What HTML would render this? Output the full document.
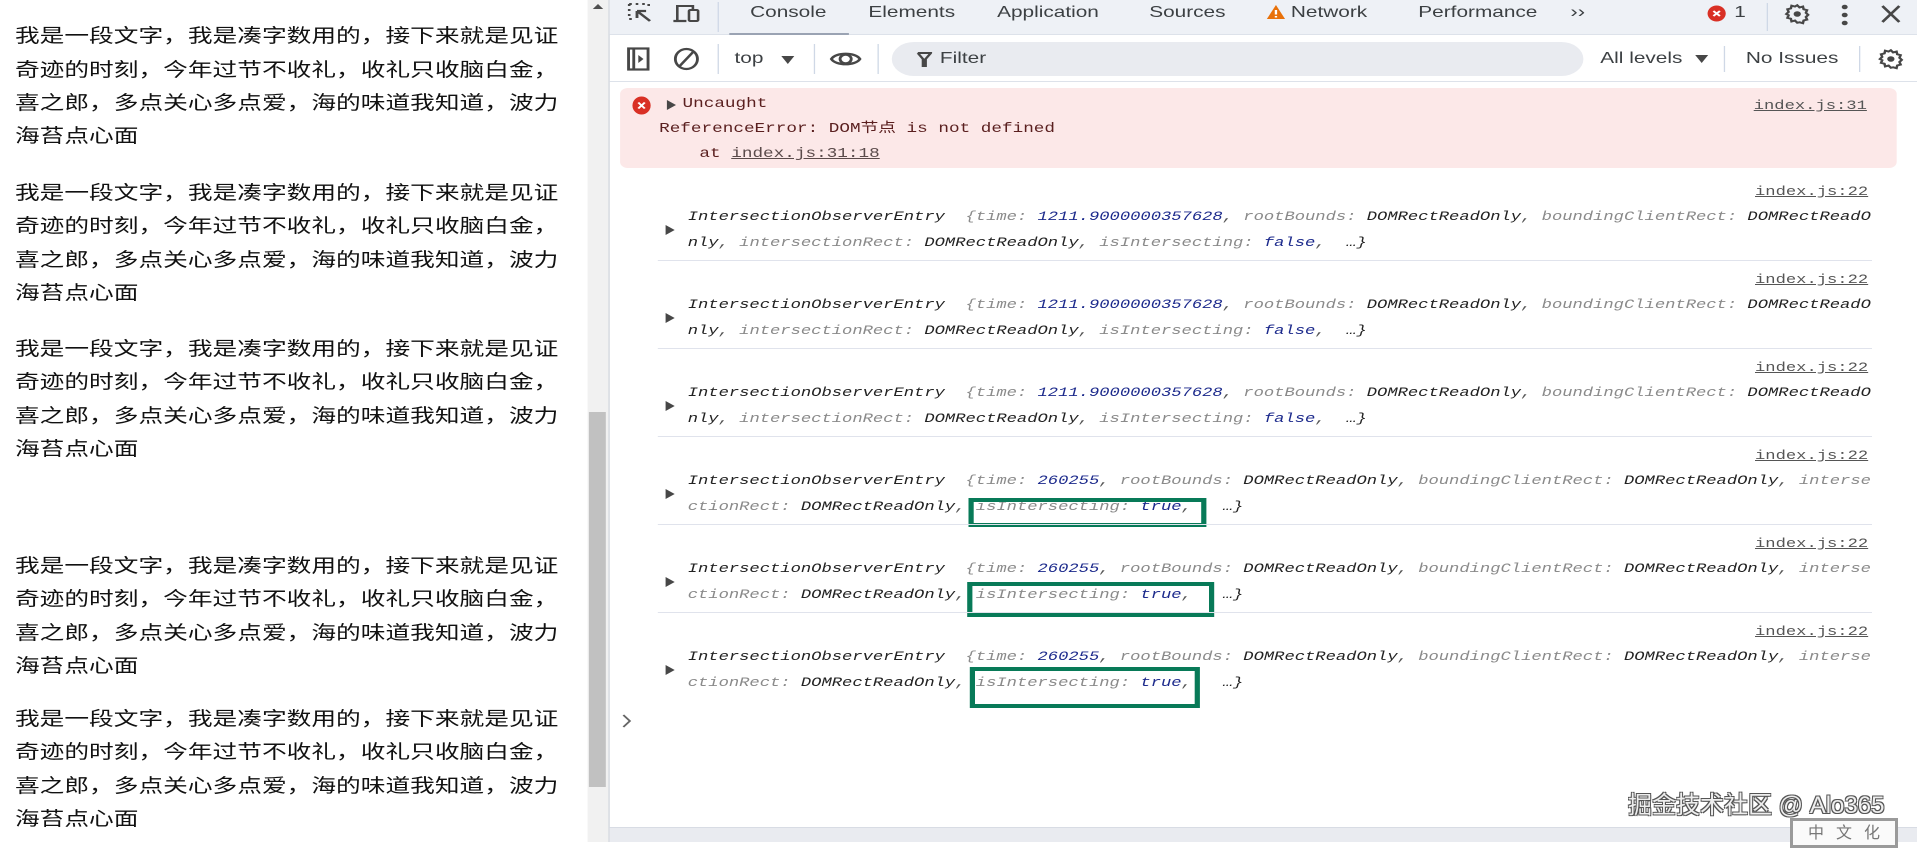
<!DOCTYPE html>
<html><head><meta charset="utf-8">
<style>
*{margin:0;padding:0;box-sizing:border-box}
html,body{width:1917px;height:842px;overflow:hidden;background:#fff}
#w{position:absolute;left:0;top:0;width:1475px;height:842px;transform:scaleX(1.3);transform-origin:0 0;overflow:hidden}
.a{position:absolute;white-space:pre}
.p{position:absolute;left:11.5px;font:19px/33.3px "Liberation Sans","Noto Sans CJK SC",sans-serif;color:#111;white-space:pre}
.ui{font-family:"Liberation Sans",sans-serif;font-size:16px;color:#3c4043;line-height:20px}
.m{font-family:"Liberation Mono","Noto Sans CJK SC",monospace;font-size:13.2px;line-height:20px}
.i{font-style:italic}
.k{color:#8a8a8a}.v{color:#222}.n{color:#1c2a8c}.d{color:#555}
.lnk{color:#555;text-decoration:underline}
.sep{position:absolute;left:506px;width:934px;height:1px;background:#e0e3ec}
.tri{position:absolute;width:0;height:0;border-top:5px solid transparent;border-bottom:5px solid transparent;border-left:7px solid #474747}
.gb{position:absolute;border:4px solid #087a58}
.dv{position:absolute;width:1px;background:#cfd8e6}
</style></head><body>
<div id="w">
  <div class="p" style="top:20.4px">我是一段文字，我是凑字数用的，接下来就是见证
奇迹的时刻，今年过节不收礼，收礼只收脑白金，
喜之郎，多点关心多点爱，海的味道我知道，波力
海苔点心面</div>
  <div class="p" style="top:177px">我是一段文字，我是凑字数用的，接下来就是见证
奇迹的时刻，今年过节不收礼，收礼只收脑白金，
喜之郎，多点关心多点爱，海的味道我知道，波力
海苔点心面</div>
  <div class="p" style="top:333px">我是一段文字，我是凑字数用的，接下来就是见证
奇迹的时刻，今年过节不收礼，收礼只收脑白金，
喜之郎，多点关心多点爱，海的味道我知道，波力
海苔点心面</div>
  <div class="p" style="top:550px">我是一段文字，我是凑字数用的，接下来就是见证
奇迹的时刻，今年过节不收礼，收礼只收脑白金，
喜之郎，多点关心多点爱，海的味道我知道，波力
海苔点心面</div>
  <div class="p" style="top:703px">我是一段文字，我是凑字数用的，接下来就是见证
奇迹的时刻，今年过节不收礼，收礼只收脑白金，
喜之郎，多点关心多点爱，海的味道我知道，波力
海苔点心面</div>

  <div style="position:absolute;left:452px;top:0;width:16px;height:842px;background:#f1f1f1"></div>
  <div style="position:absolute;left:453px;top:412px;width:13px;height:375px;background:#c1c1c1"></div>
  <div style="position:absolute;left:456px;top:4px;width:0;height:0;border-left:4px solid transparent;border-right:4px solid transparent;border-bottom:5px solid #505050"></div>

  <div style="position:absolute;left:468px;top:0;width:1007px;height:842px;background:#fff;border-left:1px solid #d0d4dc"></div>
  <div style="position:absolute;left:469px;top:0;width:1006px;height:35px;background:#eef1f6;border-bottom:1px solid #dde2ea"></div>
  <svg class="a" style="left:482px;top:2px" width="20" height="24" viewBox="0 0 20 24"><path d="M2 2h2M7 2h2M12 2h2M2 2v2M2 7v2M2 12v2M2 17h2M17 2v2" stroke="#474747" stroke-width="2" fill="none"/><path d="M8 9l10 10M8 9v7M8 9h7" stroke="#474747" stroke-width="2.2" fill="none"/></svg>
  <svg class="a" style="left:517px;top:2px" width="22" height="24" viewBox="0 0 22 24"><path d="M4 18V4h12v3" stroke="#474747" stroke-width="2" fill="none"/><path d="M1 19h10" stroke="#474747" stroke-width="2.2"/><rect x="13" y="8" width="7" height="11" rx="1" stroke="#474747" stroke-width="2" fill="none"/></svg>
  <div class="dv" style="left:552px;top:2px;height:30px"></div>
  <div class="a ui" style="left:577px;top:3px">Console</div>
  <div style="position:absolute;left:561px;top:33px;width:92px;height:2px;background:#9aa3b3"></div>
  <div class="a ui" style="left:668px;top:3px">Elements</div>
  <div class="a ui" style="left:767px;top:3px">Application</div>
  <div class="a ui" style="left:884px;top:3px">Sources</div>
  <svg class="a" style="left:974px;top:4px" width="15" height="16" viewBox="0 0 15 16"><path d="M7.5 1L14.5 15H0.5Z" fill="#e8710a"/><path d="M7.5 6v4.5M7.5 12v1.5" stroke="#fff" stroke-width="1.8"/></svg>
  <div class="a ui" style="left:993px;top:3px">Network</div>
  <div class="a ui" style="left:1091px;top:3px">Performance</div>
  <div class="a ui" style="left:1208px;top:2px;font-size:17px">&#8250;&#8250;</div>
  <svg class="a" style="left:1313px;top:5px" width="15" height="17" viewBox="0 0 15 17"><ellipse cx="7.5" cy="8.5" rx="7" ry="8" fill="#d93025"/><path d="M5 6l5 5M10 6l-5 5" stroke="#fff" stroke-width="1.7"/></svg>
  <div class="a ui" style="left:1334px;top:3px">1</div>
  <div class="dv" style="left:1359px;top:3px;height:28px"></div>
  <svg class="a" style="left:1372px;top:1px" width="21" height="26" viewBox="0 0 24 24"><path d="M12 2l2 2.5 3-1 .6 3.1 3 1-1 3 2 2.4-2 2.4 1 3-3 1-.6 3.1-3-1L12 22l-2-2.5-3 1-.6-3.1-3-1 1-3L2.4 12l2-2.4-1-3 3-1L7 2.5l3 1z" fill="none" stroke="#474747" stroke-width="2.2"/><circle cx="12" cy="12" r="3.2" fill="#474747"/></svg>
  <svg class="a" style="left:1416px;top:3px" width="6" height="24" viewBox="0 0 6 24"><circle cx="3" cy="4" r="2.3" fill="#474747"/><circle cx="3" cy="12" r="2.3" fill="#474747"/><circle cx="3" cy="20" r="2.3" fill="#474747"/></svg>
  <svg class="a" style="left:1447px;top:5px" width="15" height="18" viewBox="0 0 15 18"><path d="M1 1l13 16M14 1L1 17" stroke="#474747" stroke-width="2.2"/></svg>

  <div style="position:absolute;left:469px;top:81px;width:1006px;height:1px;background:#dde2ea"></div>
  <svg class="a" style="left:482px;top:47px" width="18" height="24" viewBox="0 0 18 24"><rect x="1.5" y="1.5" width="15" height="21" fill="none" stroke="#474747" stroke-width="2.2"/><path d="M5.5 2v20" stroke="#474747" stroke-width="2.2"/><path d="M9 8l4 4-4 4z" fill="#474747"/></svg>
  <svg class="a" style="left:518px;top:47px" width="20" height="24" viewBox="0 0 20 24"><ellipse cx="10" cy="12" rx="8.5" ry="10" fill="none" stroke="#474747" stroke-width="2.2"/><path d="M15.5 4.5L4.5 19.5" stroke="#474747" stroke-width="2.2"/></svg>
  <div class="dv" style="left:552px;top:44px;height:30px"></div>
  <div class="a ui" style="left:565px;top:49px">top</div>
  <div style="position:absolute;left:601px;top:56px;width:0;height:0;border-left:5px solid transparent;border-right:5px solid transparent;border-top:8px solid #474747"></div>
  <div class="dv" style="left:626px;top:44px;height:30px"></div>
  <svg class="a" style="left:638px;top:49px" width="25" height="20" viewBox="0 0 25 20"><path d="M1.5 10C5 3 20 3 23.5 10C20 17 5 17 1.5 10Z" fill="none" stroke="#474747" stroke-width="2.2"/><ellipse cx="12.5" cy="10" rx="4.3" ry="4.3" fill="none" stroke="#474747" stroke-width="2.2"/></svg>
  <div class="dv" style="left:675px;top:44px;height:30px"></div>
  <div style="position:absolute;left:686px;top:42px;width:532px;height:34px;border-radius:17px;background:#e9ebf0"></div>
  <svg class="a" style="left:705px;top:51px" width="12" height="17" viewBox="0 0 12 17"><path d="M1 2h10L7 8v8M5 16V8L1 2" fill="none" stroke="#474747" stroke-width="2"/></svg>
  <div class="a ui" style="left:723px;top:49px">Filter</div>
  <div class="a ui" style="left:1231px;top:49px">All levels</div>
  <div style="position:absolute;left:1304px;top:55px;width:0;height:0;border-left:5px solid transparent;border-right:5px solid transparent;border-top:8px solid #474747"></div>
  <div class="dv" style="left:1326px;top:46px;height:26px"></div>
  <div class="a ui" style="left:1343px;top:49px">No Issues</div>
  <div class="dv" style="left:1430px;top:46px;height:26px"></div>
  <svg class="a" style="left:1444px;top:46px" width="21" height="26" viewBox="0 0 24 24"><path d="M12 2l2 2.5 3-1 .6 3.1 3 1-1 3 2 2.4-2 2.4 1 3-3 1-.6 3.1-3-1L12 22l-2-2.5-3 1-.6-3.1-3-1 1-3L2.4 12l2-2.4-1-3 3-1L7 2.5l3 1z" fill="none" stroke="#474747" stroke-width="2.2"/><circle cx="12" cy="12" r="3.2" fill="#474747"/></svg>

  <div style="position:absolute;left:477px;top:88px;width:982px;height:80px;background:#fce8e8;border-radius:6px"></div>
  <svg class="a" style="left:486px;top:96px" width="15" height="19" viewBox="0 0 15 19"><ellipse cx="7.5" cy="9.5" rx="7" ry="9" fill="#d93025"/><path d="M5 6.5l5 6M10 6.5l-5 6" stroke="#fff" stroke-width="1.7"/></svg>
  <div class="tri" style="left:513px;top:100px"></div>
  <div class="a m" style="left:525px;top:95px;color:#5a1f1f;font-size:13.6px">Uncaught</div>
  <div class="a m" style="left:507px;top:120px;color:#5a1f1f;font-size:13.6px">ReferenceError: DOM节点 is not defined</div>
  <div class="a m" style="left:538px;top:145px;color:#5a1f1f;font-size:13.6px">at <span class="lnk" style="color:#5a4a4a">index.js:31:18</span></div>
  <div class="a m lnk" style="left:1349px;top:96px">index.js:31</div>

  <div class="a m lnk" style="left:1350px;top:182px">index.js:22</div>
  <div class="tri" style="left:512px;top:225px"></div>
  <div class="a m i" style="left:529px;top:207px"><span class="v">IntersectionObserverEntry</span>  <span class="k">{time: </span><span class="n">1211.9000000357628</span><span class="d">, </span><span class="k">rootBounds: </span><span class="v">DOMRectReadOnly</span><span class="d">, </span><span class="k">boundingClientRect: </span><span class="v">DOMRectReadO</span></div>
  <div class="a m i" style="left:529px;top:233px"><span class="v">nly</span><span class="d">, </span><span class="k">intersectionRect: </span><span class="v">DOMRectReadOnly</span><span class="d">, </span><span class="k">isIntersecting: </span><span class="n">false</span><span class="d">,  </span><span class="v">…}</span></div>
  <div class="sep" style="top:260px"></div>

  <div class="a m lnk" style="left:1350px;top:270px">index.js:22</div>
  <div class="tri" style="left:512px;top:313px"></div>
  <div class="a m i" style="left:529px;top:295px"><span class="v">IntersectionObserverEntry</span>  <span class="k">{time: </span><span class="n">1211.9000000357628</span><span class="d">, </span><span class="k">rootBounds: </span><span class="v">DOMRectReadOnly</span><span class="d">, </span><span class="k">boundingClientRect: </span><span class="v">DOMRectReadO</span></div>
  <div class="a m i" style="left:529px;top:321px"><span class="v">nly</span><span class="d">, </span><span class="k">intersectionRect: </span><span class="v">DOMRectReadOnly</span><span class="d">, </span><span class="k">isIntersecting: </span><span class="n">false</span><span class="d">,  </span><span class="v">…}</span></div>
  <div class="sep" style="top:348px"></div>

  <div class="a m lnk" style="left:1350px;top:358px">index.js:22</div>
  <div class="tri" style="left:512px;top:401px"></div>
  <div class="a m i" style="left:529px;top:383px"><span class="v">IntersectionObserverEntry</span>  <span class="k">{time: </span><span class="n">1211.9000000357628</span><span class="d">, </span><span class="k">rootBounds: </span><span class="v">DOMRectReadOnly</span><span class="d">, </span><span class="k">boundingClientRect: </span><span class="v">DOMRectReadO</span></div>
  <div class="a m i" style="left:529px;top:409px"><span class="v">nly</span><span class="d">, </span><span class="k">intersectionRect: </span><span class="v">DOMRectReadOnly</span><span class="d">, </span><span class="k">isIntersecting: </span><span class="n">false</span><span class="d">,  </span><span class="v">…}</span></div>
  <div class="sep" style="top:436px"></div>

  <div class="a m lnk" style="left:1350px;top:446px">index.js:22</div>
  <div class="tri" style="left:512px;top:489px"></div>
  <div class="a m i" style="left:529px;top:471px"><span class="v">IntersectionObserverEntry</span>  <span class="k">{time: </span><span class="n">260255</span><span class="d">, </span><span class="k">rootBounds: </span><span class="v">DOMRectReadOnly</span><span class="d">, </span><span class="k">boundingClientRect: </span><span class="v">DOMRectReadOnly</span><span class="d">, </span><span class="k">interse</span></div>
  <div class="a m i" style="left:529px;top:497px"><span class="k">ctionRect: </span><span class="v">DOMRectReadOnly</span><span class="d">, </span><span class="k">isIntersecting: </span><span class="n">true</span><span class="d">,   </span><span class="v">…}</span></div>
  <div class="gb" style="left:745px;top:498px;width:183px;height:29px"></div>
  <div class="sep" style="top:524px"></div>

  <div class="a m lnk" style="left:1350px;top:534px">index.js:22</div>
  <div class="tri" style="left:512px;top:577px"></div>
  <div class="a m i" style="left:529px;top:559px"><span class="v">IntersectionObserverEntry</span>  <span class="k">{time: </span><span class="n">260255</span><span class="d">, </span><span class="k">rootBounds: </span><span class="v">DOMRectReadOnly</span><span class="d">, </span><span class="k">boundingClientRect: </span><span class="v">DOMRectReadOnly</span><span class="d">, </span><span class="k">interse</span></div>
  <div class="a m i" style="left:529px;top:585px"><span class="k">ctionRect: </span><span class="v">DOMRectReadOnly</span><span class="d">, </span><span class="k">isIntersecting: </span><span class="n">true</span><span class="d">,   </span><span class="v">…}</span></div>
  <div class="gb" style="left:744px;top:582px;width:190px;height:35px"></div>
  <div class="sep" style="top:612px"></div>

  <div class="a m lnk" style="left:1350px;top:622px">index.js:22</div>
  <div class="tri" style="left:512px;top:665px"></div>
  <div class="a m i" style="left:529px;top:647px"><span class="v">IntersectionObserverEntry</span>  <span class="k">{time: </span><span class="n">260255</span><span class="d">, </span><span class="k">rootBounds: </span><span class="v">DOMRectReadOnly</span><span class="d">, </span><span class="k">boundingClientRect: </span><span class="v">DOMRectReadOnly</span><span class="d">, </span><span class="k">interse</span></div>
  <div class="a m i" style="left:529px;top:673px"><span class="k">ctionRect: </span><span class="v">DOMRectReadOnly</span><span class="d">, </span><span class="k">isIntersecting: </span><span class="n">true</span><span class="d">,   </span><span class="v">…}</span></div>
  <div class="gb" style="left:746px;top:667px;width:177px;height:41px"></div>

  <svg class="a" style="left:478px;top:713px" width="8" height="16" viewBox="0 0 8 16"><path d="M1.5 2l5 6-5 6" fill="none" stroke="#666" stroke-width="1.6"/></svg>

  <div style="position:absolute;left:469px;top:827px;width:1006px;height:15px;background:#e9ebf0;border-top:1px solid #d8dce4"></div>
</div>

<div class="a" style="left:1628px;top:790px;font:24px/32px 'Liberation Sans','Noto Sans CJK SC',sans-serif;color:#eeeeee;text-shadow:-1px -1px 0 #555,1px -1px 0 #555,-1px 1px 0 #555,1px 1px 0 #555">掘金技术社区 @ Alo365</div>
<div style="position:absolute;left:1790px;top:818px;width:108px;height:30px;border:3px solid #9a9a9a;background:#fafafa"></div>
<div class="a" style="left:1808px;top:822px;font:16px/18px 'Noto Sans CJK SC',sans-serif;color:#777;letter-spacing:12px">中文化</div>
</body></html>
